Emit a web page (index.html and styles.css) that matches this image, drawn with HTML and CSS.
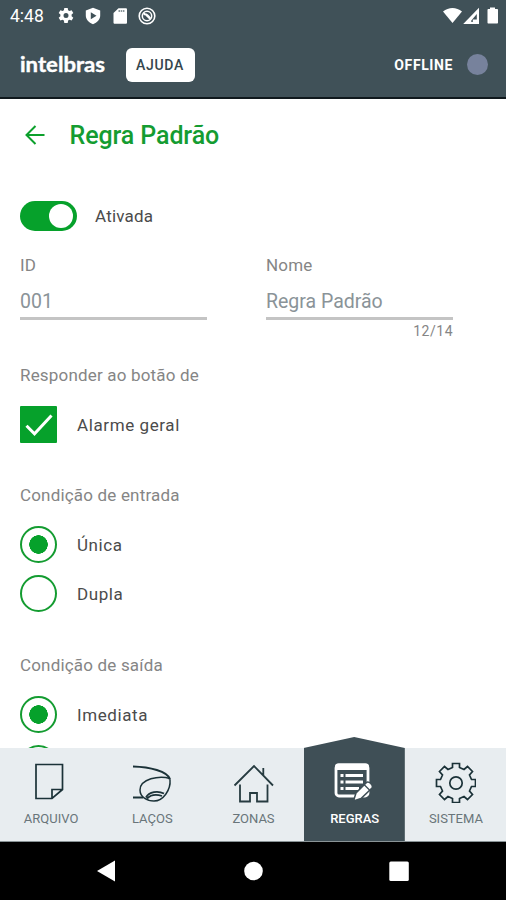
FILE: index.html
```
<!DOCTYPE html>
<html lang="pt-BR">
<head>
  <meta charset="UTF-8">
  <meta name="viewport" content="width=device-width, initial-scale=1">
  <title>Regra Padrão</title>
  <link rel="stylesheet" href="styles.css">
</head>
<body>

<!-- Status bar -->
<div class="status">
  <span class="clock">4:48</span>
  <svg class="st-icon" viewBox="0 0 18 18"><path fill="#fff" fill-rule="evenodd" d="M7.300 1h3.400l.4 2.200 1.400.8 2.100-.8 1.700 2.900-1.700 1.500v1.600l1.700 1.500-1.700 2.900-2.100-.8-1.400.8-.4 2.300H7.300l-.4-2.300-1.400-.8-2.100.8-1.700-2.900 1.700-1.500V7.600L1.700 6.100l1.700-2.900 2.100.8 1.400-.8zM9 6a2.500 2.500 0 1 0 0 5 2.500 2.500 0 0 0 0-5z"/></svg>
  <svg class="st-icon" viewBox="0 0 18 18"><path fill="#fff" fill-rule="evenodd" d="M9 .8l7.200 2.700v5c0 4-3 7-7.200 8.700C4.800 15.500 1.800 12.500 1.800 8.500v-5zM6.800 5.200v7L12.500 8.700z"/></svg>
  <svg class="st-icon" viewBox="0 0 18 18"><path fill="#fff" d="M7.500 1.300h7.200c.8 0 1.300.5 1.300 1.300v12.800c0 .8-.5 1.300-1.300 1.300H3.800c-.8 0-1.300-.5-1.300-1.300V6z"/><path stroke="#8b979b" stroke-width="1.800" stroke-dasharray="1.500 .7" d="M7.500 4h6.500"/></svg>
  <svg class="st-icon" viewBox="0 0 18 18"><g fill="none" stroke="#fff"><circle cx="9" cy="9" r="7.800" stroke-width="1.600"/><circle cx="9" cy="9" r="4.700" stroke-width="1.500"/><path stroke-width="1.600" d="M5.500 7.500c3-1.500 5 1 7 4M5.700 5.700l6.600 6.600"/></g></svg>
  <svg class="signals" viewBox="0 0 56 18">
    <path fill="#fff" d="M1 4.500C6.500-.2 14.500-.2 20 4.500L10.500 16z"/>
    <path fill="#fff" fill-rule="evenodd" d="M37 .8V17H21.200zM34.800 7l-5.500 6.500V15h1.500v-2.500h4z"/>
    <path fill="#fff" d="M48 .5h5V2h2c.6 0 1 .4 1 1v12.500c0 .7-.4 1-1 1h-8.500c-.6 0-1-.3-1-1V3c0-.6.4-1 1-1H48z"/>
  </svg>
</div>

<!-- App bar -->
<header class="appbar">
  <svg class="logo" viewBox="0 0 86 36"><text x="0" y="25" textLength="85" lengthAdjust="spacingAndGlyphs">intelbras</text></svg>
  <button class="help">AJUDA</button>
  <span class="offline">OFFLINE</span>
  <span class="dot"></span>
</header>

<!-- Rule form -->
<main class="content">
  <div class="title-row">
    <svg class="back" viewBox="0 0 20 20"><path fill="none" stroke="#0ca02c" stroke-width="2" d="M19.500 10H1.500M10.500 1L1.500 10l9 9"/></svg>
    <h1>Regra Padrão</h1>
  </div>

  <div class="switch-row">
    <span class="switch"></span>
    <span class="switch-text">Ativada</span>
  </div>

  <div class="fields">
    <div class="field">
      <div class="label">ID</div>
      <div class="value">001</div>
    </div>
    <div class="field name">
      <div class="label">Nome</div>
      <div class="value">Regra Padrão</div>
      <div class="counter">12/14</div>
    </div>
  </div>

  <section class="group answer">
    <div class="label">Responder ao botão de</div>
    <div class="option">
      <svg class="check" viewBox="0 0 37 37"><rect width="37" height="37" rx="1" fill="#06a12b"/><path fill="none" stroke="#fff" stroke-width="3" d="M6.500 19.800l8 8L31.500 9.500"/></svg>
      <span class="option-text">Alarme geral</span>
    </div>
  </section>

  <section class="group entry">
    <div class="label">Condição de entrada</div>
    <div class="option"><span class="radio on"></span><span class="option-text">Única</span></div>
    <div class="option"><span class="radio"></span><span class="option-text">Dupla</span></div>
  </section>

  <section class="group exit">
    <div class="label">Condição de saída</div>
    <div class="option"><span class="radio on"></span><span class="option-text">Imediata</span></div>
    <div class="option"><span class="radio"></span></div>
  </section>
</main>

<!-- Bottom tabs -->
<nav class="tabs">
  <div class="tab">
    <svg viewBox="0 0 42 42"><path fill="none" stroke="#1b3238" stroke-width="1.700" d="M6 3.500h26.500v25L22 37.500H6zM22 37.500v-9h10.500"/></svg>
    <span>ARQUIVO</span>
  </div>
  <div class="tab">
    <svg viewBox="0 0 42 42"><g fill="none" stroke="#1b3238"><path stroke-width="2.200" d="M2 5.500c16 .5 35 4.500 37 13"/><path stroke-width="1.500" d="M39 17.500C28 14 9 18 9 29c0 7 7 11 14 11 9 0 17-11 16-21.500"/><path stroke-width="2" d="M2 36.500h10"/><path stroke-width="1.800" d="M15 36.500c3-6 12-7 18-4M16 37.500c4-4 9-4.500 15-2.500"/></g></svg>
    <span>LAÇOS</span>
  </div>
  <div class="tab">
    <svg viewBox="0 0 42 42"><g fill="none" stroke="#263b40" stroke-width="1.800"><path d="M2.500 24.500L22 5l19 19.500M31.300 14V7"/><path d="M8 23.500v17h10v-8.500h7v8.500h10.500v-17"/></g></svg>
    <span>ZONAS</span>
  </div>
  <div class="tab active">
    <svg viewBox="0 0 42 42"><rect x="3" y="4" width="32" height="31" rx="3" fill="none" stroke="#fff" stroke-width="2.800"/><path fill="#fff" d="M2 8V5.500c0-2 1-3 3-3h28c2 0 3 1 3 3V9H2z"/><path fill="none" stroke="#fff" stroke-width="2.800" d="M7.500 14.500h3M12.500 14.500h17.500M7.500 21h3M12.500 21h17.500M7.500 27.500h3M12.500 27.500H26"/><path fill="#fff" stroke="#3f4f56" stroke-width="1.500" d="M33.500 21.500c2-2 7.500 3 5.500 5.500L28 37.500l-7.500 2.500 2.500-8z"/><path stroke="#3f4f56" stroke-width="1.300" d="M31 23.500l5.500 5.500"/></svg>
    <span>REGRAS</span>
  </div>
  <div class="tab">
    <svg viewBox="0 0 42 42"><g fill="none" stroke="#1b3238" stroke-width="1.700"><path d="M18.500 2.500h7v4l4.500 2 3.500-3 5 5-3 3.500 2 4.500h4v7h-4l-2 4.500 3 3.500-5 5-3.500-3-4.500 2v4h-7v-4l-4.500-2-3.500 3-5-5 3-3.500-2-4.500H2.500v-7h4l2-4.500-3-3.500 5-5 3.500 3 4.500-2z"/><circle cx="22" cy="22" r="6.200"/></g></svg>
    <span>SISTEMA</span>
  </div>
</nav>

<!-- Android navigation -->
<div class="sysnav">
  <svg viewBox="0 0 24 24"><path fill="#fff" d="M20 1.500v21L2 12z"/></svg>
  <svg viewBox="0 0 24 24"><circle cx="12.500" cy="12" r="9.300" fill="#fff"/></svg>
  <svg viewBox="0 0 24 24"><rect x="2.300" y="2.500" width="19.500" height="19.500" rx="1.500" fill="#fff"/></svg>
</div>

</body>
</html>
```
FILE: styles.css
```
* {
  box-sizing: border-box;
}

body {
  margin: 0;
  width: 506px;
  height: 900px;
  display: flex;
  flex-direction: column;
  overflow: hidden;
  background: #fff;
  font-family: Roboto, "Liberation Sans", sans-serif;
}

svg {
  display: block;
  flex: none;
}

/* status bar */
.status {
  height: 32px;
  flex: none;
  display: flex;
  align-items: center;
  padding: 0 8px 0 10px;
  background: #405158;
  color: #fff;
}

.clock {
  width: 47px;
  font-size: 17.5px;
}

.st-icon {
  width: 18px;
  height: 18px;
  margin-right: 9px;
}

.signals {
  width: 56px;
  height: 18px;
  margin-left: auto;
}

/* app bar */
.appbar {
  height: 67px;
  flex: none;
  display: flex;
  align-items: center;
  padding: 0 18px 0 20px;
  background: #405158;
  border-bottom: 2px solid #10191d;
  color: #fff;
}

.logo {
  width: 86px;
  height: 36px;
}

.logo text {
  font-family: Lato, sans-serif;
  font-weight: 700;
  font-size: 21px;
  fill: #fff;
  stroke: #fff;
  stroke-width: 0.4px;
}

.help {
  width: 69px;
  height: 34px;
  margin-left: 19.500px;
  padding: 0;
  border: none;
  border-radius: 6px;
  background: #fff;
  color: #34464d;
  font: 500 14px Roboto, sans-serif;
  letter-spacing: 0.7px;
}

.offline {
  margin-left: auto;
  padding-top: 1px;
  font-size: 14px;
  font-weight: 700;
  letter-spacing: 0.6px;
}

.dot {
  width: 21px;
  height: 21px;
  margin-left: 14px;
  border-radius: 50%;
  background: #77829c;
}

/* form */
.content {
  flex: 1;
  min-height: 0;
  overflow: hidden;
  padding: 18px 20px 0;
}

.title-row {
  display: flex;
  align-items: center;
  height: 36px;
  padding-left: 5px;
}

.back {
  width: 20px;
  height: 20px;
}

h1 {
  margin: 1px 0 0 24.500px;
  font-size: 25px;
  font-weight: 500;
  letter-spacing: -0.1px;
  color: #149c31;
}

.switch-row {
  display: flex;
  align-items: center;
  height: 30px;
  margin-top: 48px;
}

.switch {
  display: flex;
  justify-content: flex-end;
  width: 57px;
  height: 30px;
  padding: 3px 4px;
  margin-right: 18px;
  border-radius: 15px;
  background: #06a12b;
}

.switch::after {
  content: "";
  width: 24px;
  height: 24px;
  border-radius: 50%;
  background: #fff;
}

.switch-text,
.option-text {
  font-size: 17px;
  color: #4b4b4b;
}

.switch-text {
  letter-spacing: 0.2px;
}

.option-text {
  padding-top: 1px;
  letter-spacing: 0.6px;
}

.fields {
  display: flex;
  gap: 59px;
  height: 84px;
  margin-top: 24px;
}

.field {
  width: 187px;
}

.label {
  height: 20px;
  line-height: 20px;
  font-size: 17px;
  letter-spacing: 0.18px;
  color: #858585;
}

.value {
  height: 45px;
  padding-top: 14px;
  border-bottom: 3px solid #c4c4c4;
  font-size: 19.5px;
  line-height: 25px;
  color: #8a9398;
}

.counter {
  margin-top: 3px;
  text-align: right;
  font-size: 14px;
  line-height: 16px;
  letter-spacing: 0.5px;
  color: #858585;
}

.group {
  display: flex;
  flex-direction: column;
  gap: 12px;
}

.group .label {
  margin-bottom: 9px;
}

.answer {
  margin-top: 25.500px;
}

.entry,
.exit {
  margin-top: 42.500px;
}

.option {
  display: flex;
  align-items: center;
  gap: 20px;
  height: 37px;
}

.check {
  width: 37px;
  height: 37px;
}

.radio {
  width: 37px;
  height: 37px;
  border: 2px solid #149c31;
  border-radius: 50%;
}

.radio.on {
  background: radial-gradient(circle, #06a12b 9px, transparent 9.500px);
}

/* bottom tabs */
.tabs {
  display: flex;
  flex: none;
  height: 94px;
  background: #e8edf0;
  border-bottom: 1px solid #899396;
}

.tab {
  flex: 1;
  display: flex;
  flex-direction: column;
  align-items: center;
  padding-top: 13px;
  font-size: 13px;
  color: #69757a;
}

.tab svg {
  width: 42px;
  height: 42px;
}

.tab span {
  margin-top: 7px;
  padding-left: 1px;
  line-height: 17px;
  white-space: nowrap;
}

/* pointed top rises above the bar */
.tab.active {
  margin-top: -11px;
  padding-top: 24px;
  background: #3f4f56;
  color: #fff;
  font-weight: 500;
  clip-path: polygon(0 11px, 50% 0, 100% 11px, 100% 100%, 0 100%);
}

/* android buttons */
.sysnav {
  display: flex;
  flex: none;
  justify-content: space-between;
  align-items: center;
  height: 58px;
  padding: 0 95px;
  background: #000;
}

.sysnav svg {
  width: 24px;
  height: 24px;
}
```
